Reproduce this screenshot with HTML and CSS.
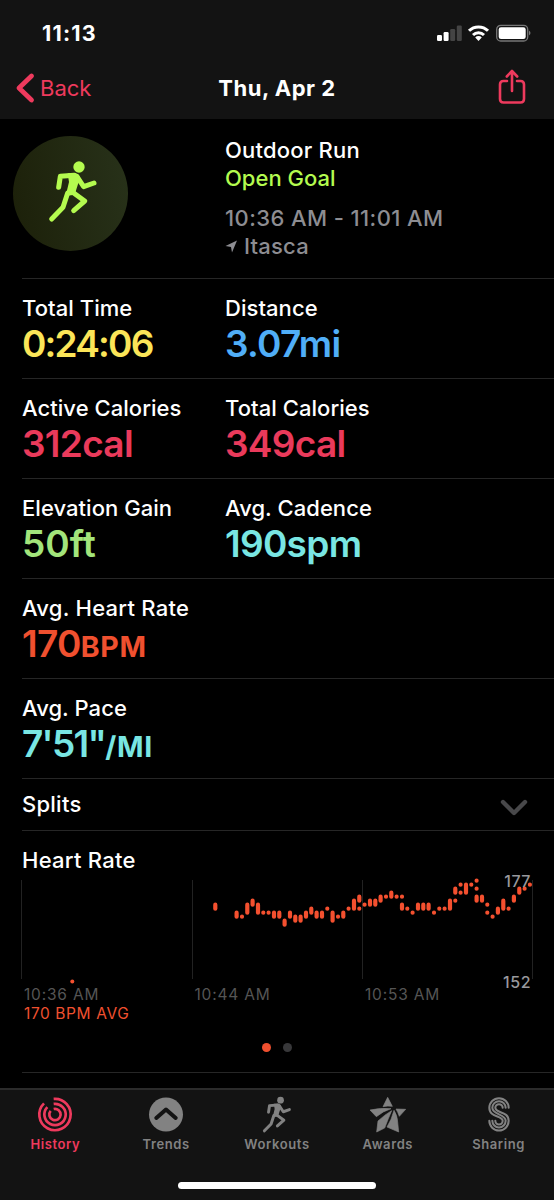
FILE: index.html
```
<!DOCTYPE html>
<html lang="en">
<head>
    <meta charset="UTF-8">
    <meta name="viewport" content="width=device-width, initial-scale=1.0">
    <title>Outdoor Run</title>
    <link rel="stylesheet" href="styles.css">
</head>
<body>
    <header>
        <div class="status">
            <span class="clock">11:13</span>
            <svg class="status-icons" width="96" height="20" viewBox="0 0 96 20">
                <rect x="1" y="11" width="5" height="6" rx="1.2" fill="#fff"/>
                <rect x="7.6" y="8" width="5" height="9" rx="1.2" fill="#fff"/>
                <rect x="14.2" y="5" width="5" height="12" rx="1.2" fill="#444"/>
                <rect x="20.8" y="1.5" width="5" height="15.5" rx="1.2" fill="#444"/>
                <g fill="none" stroke="#fff" stroke-width="3">
                    <path d="M33 6.8a13.5 13.5 0 0 1 19 0"/>
                    <path d="M37 11a8 8 0 0 1 11 0"/>
                </g>
                <path d="M39.2 13.5a4.6 4.6 0 0 1 6.6 0L42.5 17z" fill="#fff"/>
                <rect x="60.7" y="1.4" width="31" height="15.6" rx="4" fill="none" stroke="#777" stroke-width="1.3"/>
                <rect x="62.7" y="3.3" width="27" height="11.8" rx="2.3" fill="#fff"/>
                <path d="M93 6.5q3 2.500 0 5z" fill="#777"/>
            </svg>
        </div>
        <nav class="navbar">
            <a class="back">
                <svg width="20" height="30" viewBox="0 0 20 30"><path d="M16.500 3L4 15l12.500 12" fill="none" stroke="currentColor" stroke-width="4.8" stroke-linecap="round" stroke-linejoin="round"/></svg>
                <span>Back</span>
            </a>
            <h1>Thu, Apr 2</h1>
            <svg class="share" width="28" height="36" viewBox="0 0 28 36" fill="none" stroke="currentColor" stroke-width="2.600" stroke-linecap="round" stroke-linejoin="round">
                <path d="M9 12H5.500Q2 12 2 15.500V30Q2 33.500 5.500 33.500H22.500Q26 33.500 26 30V15.500Q26 12 22.500 12H19"/>
                <path d="M14 22V2M8.800 7.500L14 2l5.200 5.500"/>
            </svg>
        </nav>
    </header>

    <main>
        <section class="summary">
            <div class="badge">
                <svg width="50" height="64" viewBox="143 106 150 192"><use href="#runner"/></svg>
            </div>
            <div class="info">
                <p>Outdoor Run</p>
                <p class="goal">Open Goal</p>
                <p class="muted time">10:36 AM - 11:01 AM</p>
                <p class="muted place">
                    <svg width="12" height="13" viewBox="0 0 12 13"><path d="M.5 6L12 .5 7 12.500 6 7z" fill="currentColor"/></svg>
                    <span>Itasca</span>
                </p>
            </div>
        </section>

        <section class="row">
            <div><h2>Total Time</h2><p class="value yellow">0:24:06</p></div>
            <div><h2>Distance</h2><p class="value blue">3.07mi</p></div>
        </section>
        <section class="row">
            <div><h2>Active Calories</h2><p class="value pink">312cal</p></div>
            <div><h2>Total Calories</h2><p class="value pink">349cal</p></div>
        </section>
        <section class="row">
            <div><h2>Elevation Gain</h2><p class="value green">50ft</p></div>
            <div><h2>Avg. Cadence</h2><p class="value cyan">190spm</p></div>
        </section>
        <section class="row">
            <div><h2 class="wide">Avg. Heart Rate</h2><p class="value orange">170<small>BPM</small></p></div>
        </section>
        <section class="row">
            <div><h2>Avg. Pace</h2><p class="value cyan pace">7'51"<small>/MI</small></p></div>
        </section>

        <section class="splits">
            <h2 class="wide">Splits</h2>
            <svg width="28" height="18" viewBox="0 0 28 18"><path d="M3 3l11 11L25 3" fill="none" stroke="#48484a" stroke-width="4.400" stroke-linecap="round" stroke-linejoin="round"/></svg>
        </section>

        <section class="heart">
            <h2 class="wide">Heart Rate</h2>
            <div class="chart">
                <svg width="533" height="106" viewBox="0 0 533 106">
                    <path d="M-.5 6V105M170.500 6V105M340.500 6V105M510.500 6V105" stroke="#222" fill="none"/>
                    <path id="beats" stroke="#f4502f" stroke-width="4.200" stroke-linecap="round" fill="none"/>
                    <circle cx="50.300" cy="107.500" r="2" fill="#f4502f"/>
                </svg>
                <span class="max">177</span>
                <span class="min">152</span>
            </div>
            <div class="ticks"><span>10:36 AM</span><span>10:44 AM</span><span>10:53 AM</span></div>
            <p class="avg">170 BPM AVG</p>
            <div class="pages"><i class="on"></i><i></i></div>
        </section>
    </main>

    <footer>
        <div class="tabs">
            <a class="tab selected">
                <svg width="36" height="36" viewBox="112 64 108 108" fill="none" stroke="currentColor" stroke-width="8">
                    <path d="M162 71.200A47 47 0 1 1 133 84.500"/>
                    <path d="M162 86.200A32 32 0 1 1 143 95.800"/>
                    <path d="M162 101.500A17 17 0 1 1 153 107"/>
                </svg>
                <span>History</span>
            </a>
            <a class="tab">
                <svg width="36" height="36" viewBox="0 0 36 36"><circle cx="18" cy="18" r="17" fill="currentColor"/><path d="M8.300 21.500L18 13l9.700 8.500" fill="none" stroke="#131313" stroke-width="4" stroke-linecap="round" stroke-linejoin="round"/></svg>
                <span>Trends</span>
            </a>
            <a class="tab">
                <svg width="30" height="37" viewBox="143 106 150 188"><use href="#runner"/></svg>
                <span>Workouts</span>
            </a>
            <a class="tab">
                <svg width="38" height="37" viewBox="99 63 114 111" fill="currentColor" stroke="currentColor" stroke-width="2" stroke-linejoin="round">
                    <path d="M155 67L141 95Q155 92 169 94zM102 105Q133 98 165 101Q142 108 121 125zM180 102L209 103L190 124Q186 112 180 102zM167 107Q157 130 146 159L122 171L126 138Q146 119 167 107zM174 106Q184 121 185 141L188 171L153 156Q167 134 174 106z"/>
                </svg>
                <span>Awards</span>
            </a>
            <a class="tab">
                <svg width="26" height="36" viewBox="451 64 78 108" fill="none" stroke="currentColor" stroke-width="6.200" stroke-linecap="round">
                    <path d="M519 98A29 29 0 0 0 461 98C461 128 501 120 501 137A11 11 0 0 1 479 137"/>
                    <path d="M510 98A20 20 0 0 0 470 98C470 120 510 115 510 137A20 20 0 0 1 470 137"/>
                    <path d="M501 98A11 11 0 0 0 479 98C479 115 519 107 519 137A29 29 0 0 1 461 137"/>
                </svg>
                <span>Sharing</span>
            </a>
        </div>
        <div class="home"></div>
    </footer>

    <svg width="0" height="0" class="defs">
        <symbol id="runner" overflow="visible">
            <circle cx="236" cy="127" r="17" fill="currentColor"/>
            <g fill="none" stroke="currentColor" stroke-width="15" stroke-linecap="round" stroke-linejoin="round">
                <path d="M175 188L180 155L222 152"/>
                <path d="M230 156L250 186L281 175"/>
                <path d="M202 205L188 248L154 283"/>
                <path d="M216 202L253 229L220 258"/>
            </g>
            <path d="M202 146H226Q240 150 238 162L223 210L196 214L206 172z" fill="currentColor"/>
        </symbol>
    </svg>

    <script>
        // column, then the first and last level of the bar (one level is 4px)
        const beats = [
            [0,6,7],[4,8,9],[5,9,9],[6,6,8],[7,5,6],[8,6,8],[9,8,8],[10,8,8],[11,8,9],[12,8,9],
            [13,10,11],[14,8,9],[15,9,10],[16,9,10],[17,8,9],[18,7,8],[19,8,9],[20,8,9],[21,7,7],[22,8,10],
            [23,9,9],[24,8,9],[25,7,7],[26,5,7],[27,4,5],[27,7,7],[28,6,6],[29,5,6],[30,5,6],[31,4,5],
            [32,4,4],[33,3,4],[34,4,4],[35,4,4],[35,6,7],[36,7,7],[37,8,8],[38,6,7],[39,6,7],[40,6,7],
            [41,8,8],[42,7,7],[43,7,7],[44,5,7],[45,2,3],[45,5,5],[46,1,1],[46,3,3],[47,1,3],[48,1,1],
            [49,0,0],[49,2,2],[49,4,5],[50,4,5],[51,6,6],[51,8,8],[52,9,9],[53,7,8],[54,5,7],[55,7,7],
            [56,4,5],[57,2,3],[58,2,2],[59,1,1]
        ];
        document.getElementById('beats').setAttribute('d', beats.map(function (b) {
            const x = (193.3 + b[0] * 5.333).toFixed(1);
            return `M${x} ${6.7 + b[1] * 4}V${6.71 + b[2] * 4}`;
        }).join(''));
    </script>
</body>
</html>
```
FILE: styles.css
```
* {
    margin: 0;
    padding: 0;
    box-sizing: border-box;
}
body {
    width: 554px;
    height: 1200px;
    display: flex;
    flex-direction: column;
    overflow: hidden;
    background-color: #000;
    color: #fff;
    font-family: Inter, "Liberation Sans", sans-serif;
    font-size: 22px;
    line-height: 28px;
}
svg {
    display: block;
    flex: none;
    overflow: visible;
}
header {
    height: 119px;
    background-color: #131313;
}
.status {
    height: 58px;
    padding: 19px 22px 0 42px;
    display: flex;
    justify-content: space-between;
}
.clock {
    font-size: 21.5px;
    font-weight: 700;
    letter-spacing: 1.2px;
}
.status-icons {
    margin-top: 5px;
}
.navbar {
    height: 60px;
    padding: 0 15px;
    display: grid;
    grid-template-columns: 1fr auto 1fr;
    align-items: center;
}
.back {
    display: flex;
    align-items: center;
    gap: 5px;
    color: #ee3a5d;
}
h1 {
    font-size: 22px;
    font-weight: 700;
    letter-spacing: 0.5px;
}
.share {
    justify-self: end;
    color: #ee3a5d;
    margin: -3px 13px 0 0;
}
.summary {
    height: 160px;
    padding: 17px 0 0 13px;
    display: flex;
    gap: 97px;
    position: relative;
}
.summary::after {
    content: "";
    position: absolute;
    left: 22px;
    right: 0;
    bottom: 0;
    height: 1px;
    background-color: #262626;
}
.badge {
    width: 115px;
    height: 115px;
    border-radius: 50%;
    background: linear-gradient(80deg, #1c2009, #28321a);
    color: #b4fb4f;
    display: flex;
    align-items: center;
    justify-content: center;
    padding: 0 0 3px 5px;
}
.info {
    font-weight: 500;
    letter-spacing: 0.2px;
}
.goal {
    color: #b4fb4f;
    letter-spacing: 0;
}
.muted {
    color: #8d8d92;
}
.time {
    margin-top: 12px;
    letter-spacing: 0.4px;
}
.place {
    display: flex;
    align-items: center;
    gap: 7px;
}
.row {
    height: 100px;
    margin-left: 22px;
    padding-top: 15px;
    display: grid;
    grid-template-columns: 203px 1fr;
    border-bottom: 1px solid #262626;
}
h2 {
    font-size: 22px;
    font-weight: 500;
    line-height: 28px;
    letter-spacing: 0.05px;
}
.wide {
    letter-spacing: 0.25px;
}
.value {
    margin-top: 2px;
    font-size: 37px;
    font-weight: 600;
    line-height: 40px;
    letter-spacing: -0.7px;
}
.value small {
    font-size: 28.5px;
    font-weight: 700;
    letter-spacing: 0.7px;
}
.yellow { color: #fbe558; letter-spacing: -1.800px; }
.blue { color: #50aef7; }
.pink { color: #ea3a5b; }
.green { color: #a3e57b; letter-spacing: 0; }
.cyan { color: #79e6e3; }
.orange { color: #f0502f; }
.pace { letter-spacing: -1.700px; }
.splits {
    height: 52px;
    margin-left: 22px;
    padding: 11px 26px 0 0;
    display: flex;
    justify-content: space-between;
    border-bottom: 1px solid #262626;
}
.splits svg {
    margin-top: 9px;
}
.heart {
    height: 242px;
    margin-left: 22px;
    padding-top: 15px;
    border-bottom: 1px solid #262626;
}
.chart {
    position: relative;
    height: 112px;
}
.max, .min {
    position: absolute;
    right: 23px;
    font-size: 16px;
    font-weight: 500;
    line-height: 16px;
    letter-spacing: 0.5px;
    color: #98989c;
}
.max {
    top: -1px;
}
.min {
    top: 100px;
}
.ticks {
    display: grid;
    grid-template-columns: repeat(3, 170.500px);
    padding-left: 2px;
    font-size: 15.500px;
    line-height: 18px;
    letter-spacing: 0.8px;
    color: #555;
}
.avg {
    padding-left: 2px;
    font-size: 15.500px;
    line-height: 19px;
    letter-spacing: 0.6px;
    color: #f0502f;
}
.pages {
    display: flex;
    gap: 12px;
    margin-left: 240px;
    margin-top: 20px;
}
.pages i {
    width: 9px;
    height: 9px;
    border-radius: 50%;
    background-color: #38383a;
}
.pages .on {
    background-color: #f0502f;
}
footer {
    margin-top: auto;
    height: 112px;
    background-color: #131313;
    border-top: 2px solid #2b2b2b;
}
.tabs {
    display: grid;
    grid-template-columns: repeat(5, 1fr);
    height: 92px;
    padding-top: 6px;
}
.tab {
    display: flex;
    flex-direction: column;
    align-items: center;
    color: #828282;
    font-size: 13px;
    font-weight: 600;
    line-height: 18px;
    letter-spacing: 0.600px;
}
.tab svg {
    height: 37px;
    margin-bottom: 2px;
}
.selected {
    color: #ee3a5d;
}
.home {
    width: 198px;
    height: 7px;
    margin-left: 178px;
    border-radius: 4px;
    background-color: #fff;
}
.defs {
    position: absolute;
}
```
